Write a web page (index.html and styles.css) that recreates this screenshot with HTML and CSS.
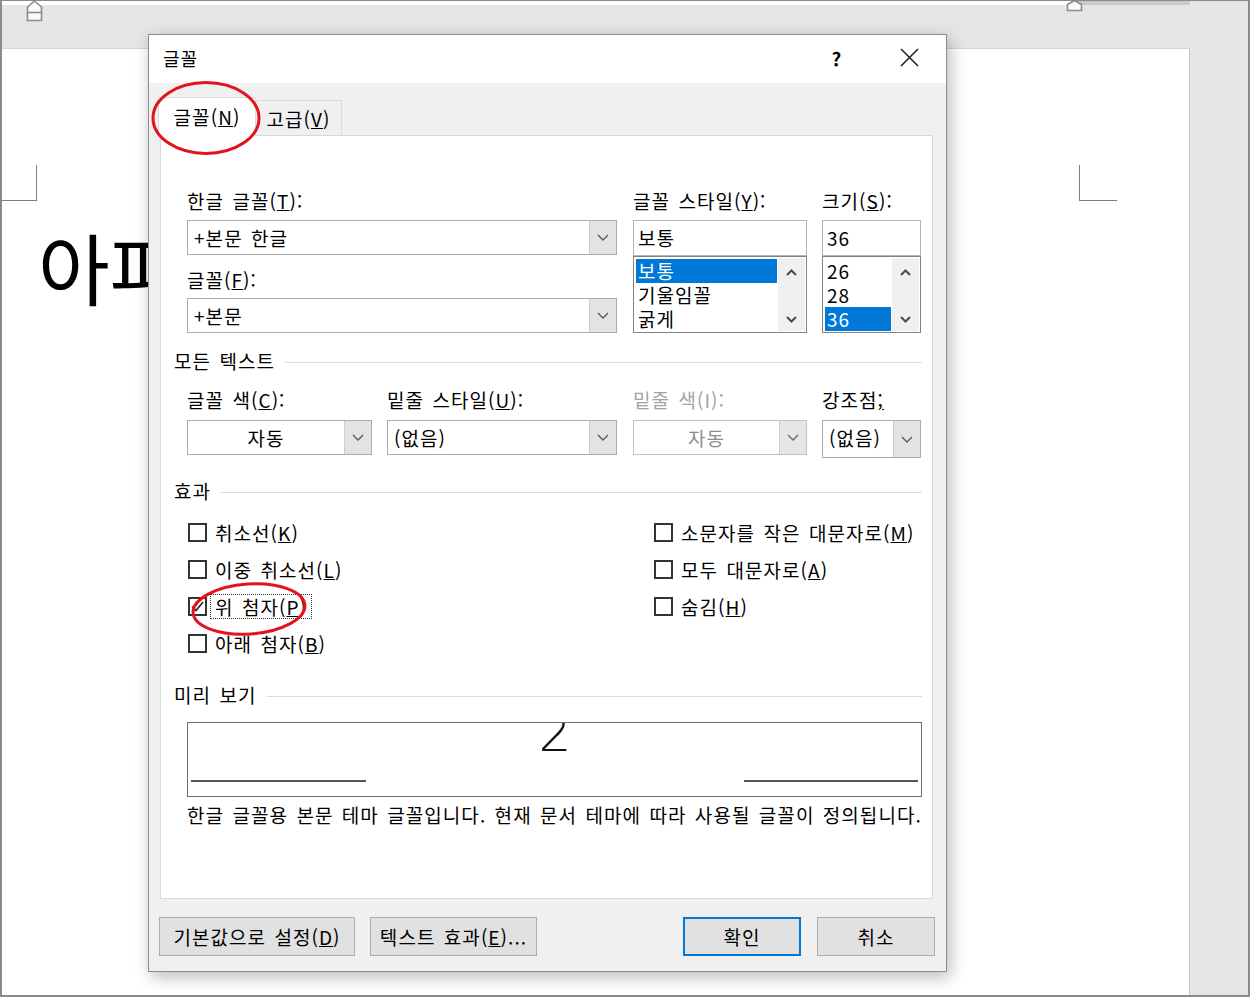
FILE: index.html
```html
<!DOCTYPE html>
<html lang="ko">
<head>
<meta charset="utf-8">
<title>글꼴</title>
<link rel="stylesheet" href="styles.css">
</head>
<body>
<div class="screen">
  <div class="doc-area">
    <div class="ruler"><div class="ruler-white"></div><div class="ruler-gray"></div></div>
    <div class="band"></div>
    <div class="page">
      <div class="corners"><div class="corner corner-left"></div><div class="corner corner-right"></div></div>
      <div class="big-text">아파트</div>
    </div>
  </div>
  <div class="side"></div>
</div>

<svg class="marker marker-left" width="17" height="22" viewBox="0 0 17 22"><path d="M8.5 1 L15.5 7 L15.5 20.5 L1.5 20.5 L1.5 7 Z" fill="#fbfbfb" stroke="#8a8a8a" stroke-width="1.6"/><path d="M1.5 12.5 H15.5" stroke="#8a8a8a" stroke-width="1.6"/></svg>
<svg class="marker marker-right" width="17" height="12" viewBox="0 0 17 12"><path d="M8.5 0.5 L15.5 4.5 L15.5 10.5 L1.5 10.5 L1.5 4.5 Z" fill="#fbfbfb" stroke="#8a8a8a" stroke-width="1.6"/></svg>

<div class="dialog">
  <div class="titlebar">
    <span class="title">글꼴</span>
    <span class="help">?</span>
    <span class="close"><svg width="19" height="19" viewBox="0 0 19 19"><path d="M1 1 L18 18 M18 1 L1 18" stroke="#1a1a1a" stroke-width="1.5"/></svg></span>
  </div>
  <div class="dlg-body">
    <div class="tabs">
      <div class="tab tab-active">글꼴(<u>N</u>)</div>
      <div class="tab tab-idle">고급(<u>V</u>)</div>
    </div>
    <div class="panel">
      <div class="row-top">
        <div class="col col-font">
          <div class="lbl">한글 글꼴(<u>T</u>):</div>
          <div class="combo combo-top">
            <span class="val">+본문 한글</span>
            <span class="drop"><svg width="12" height="7" viewBox="0 0 12 7"><path d="M1 1 L6 6 L11 1" fill="none" stroke="#555" stroke-width="1.3"/></svg></span>
          </div>
          <div class="lbl lbl-second">글꼴(<u>F</u>):</div>
          <div class="combo combo-second">
            <span class="val">+본문</span>
            <span class="drop"><svg width="12" height="7" viewBox="0 0 12 7"><path d="M1 1 L6 6 L11 1" fill="none" stroke="#555" stroke-width="1.3"/></svg></span>
          </div>
        </div>
        <div class="col col-style">
          <div class="lbl">글꼴 스타일(<u>Y</u>):</div>
          <div class="textbox">보통</div>
          <div class="listbox">
            <div class="items">
              <div class="item item-sel">보통</div>
              <div class="item">기울임꼴</div>
              <div class="item">굵게</div>
            </div>
            <div class="scroll">
              <svg width="11" height="7" viewBox="0 0 11 7"><path d="M1 6 L5.5 1.5 L10 6" fill="none" stroke="#4a4a4a" stroke-width="2"/></svg>
              <svg width="11" height="7" viewBox="0 0 11 7"><path d="M1 1 L5.5 5.5 L10 1" fill="none" stroke="#4a4a4a" stroke-width="2"/></svg>
            </div>
          </div>
        </div>
        <div class="col col-size">
          <div class="lbl">크기(<u>S</u>):</div>
          <div class="textbox">36</div>
          <div class="listbox">
            <div class="items">
              <div class="item">26</div>
              <div class="item">28</div>
              <div class="item item-sel">36</div>
            </div>
            <div class="scroll">
              <svg width="11" height="7" viewBox="0 0 11 7"><path d="M1 6 L5.5 1.5 L10 6" fill="none" stroke="#4a4a4a" stroke-width="2"/></svg>
              <svg width="11" height="7" viewBox="0 0 11 7"><path d="M1 1 L5.5 5.5 L10 1" fill="none" stroke="#4a4a4a" stroke-width="2"/></svg>
            </div>
          </div>
        </div>
      </div>

      <div class="section section-all">모든 텍스트</div>

      <div class="row-mid">
        <div class="col col-color">
          <div class="lbl">글꼴 색(<u>C</u>):</div>
          <div class="combo">
            <span class="val val-center">자동</span>
            <span class="drop"><svg width="12" height="7" viewBox="0 0 12 7"><path d="M1 1 L6 6 L11 1" fill="none" stroke="#555" stroke-width="1.3"/></svg></span>
          </div>
        </div>
        <div class="col col-under">
          <div class="lbl">밑줄 스타일(<u>U</u>):</div>
          <div class="combo">
            <span class="val">(없음)</span>
            <span class="drop"><svg width="12" height="7" viewBox="0 0 12 7"><path d="M1 1 L6 6 L11 1" fill="none" stroke="#555" stroke-width="1.3"/></svg></span>
          </div>
        </div>
        <div class="col col-ucolor">
          <div class="lbl lbl-disabled">밑줄 색(I):</div>
          <div class="combo combo-disabled">
            <span class="val val-center">자동</span>
            <span class="drop"><svg width="12" height="7" viewBox="0 0 12 7"><path d="M1 1 L6 6 L11 1" fill="none" stroke="#666" stroke-width="1.3"/></svg></span>
          </div>
        </div>
        <div class="col col-emph">
          <div class="lbl">강조점<u>;</u></div>
          <div class="combo combo-tall">
            <span class="val">(없음)</span>
            <span class="drop"><svg width="12" height="7" viewBox="0 0 12 7"><path d="M1 1 L6 6 L11 1" fill="none" stroke="#555" stroke-width="1.3"/></svg></span>
          </div>
        </div>
      </div>

      <div class="section section-fx">효과</div>

      <div class="effects">
        <div class="fx-col fx-left">
          <div class="fx-row"><span class="cb"></span><span class="fx-label">취소선(<u>K</u>)</span></div>
          <div class="fx-row"><span class="cb"></span><span class="fx-label">이중 취소선(<u>L</u>)</span></div>
          <div class="fx-row"><span class="cb"><svg width="15" height="15" viewBox="0 0 15 15"><path d="M2 7.5 L6 11.5 L13 3" fill="none" stroke="#222" stroke-width="1.6"/></svg></span><span class="fx-label fx-focus">위 첨자(<u>P</u>)</span></div>
          <div class="fx-row"><span class="cb"></span><span class="fx-label">아래 첨자(<u>B</u>)</span></div>
        </div>
        <div class="fx-col fx-right">
          <div class="fx-row"><span class="cb"></span><span class="fx-label">소문자를 작은 대문자로(<u>M</u>)</span></div>
          <div class="fx-row"><span class="cb"></span><span class="fx-label">모두 대문자로(<u>A</u>)</span></div>
          <div class="fx-row"><span class="cb"></span><span class="fx-label">숨김(<u>H</u>)</span></div>
        </div>
      </div>

      <div class="section section-preview">미리 보기</div>

      <div class="preview">
        <div class="pv-line pv-line-left"></div>
        <div class="pv-mid"><span class="pv-glyph">2</span></div>
        <div class="pv-line pv-line-right"></div>
      </div>
      <p class="desc">한글 글꼴용 본문 테마 글꼴입니다. 현재 문서 테마에 따라 사용될 글꼴이 정의됩니다.</p>
    </div>

    <div class="buttons">
      <button class="btn btn-default">기본값으로 설정(<u>D</u>)</button>
      <button class="btn btn-effects">텍스트 효과(<u>E</u>)...</button>
      <button class="btn btn-ok">확인</button>
      <button class="btn btn-cancel">취소</button>
    </div>
  </div>
</div>

<svg class="annot" width="1250" height="997" viewBox="0 0 1250 997">
  <ellipse cx="206" cy="118" rx="53" ry="35.5" fill="none" stroke="#e2131c" stroke-width="3"/>
  <ellipse cx="249" cy="609" rx="56" ry="25" transform="rotate(-4 249 609)" fill="none" stroke="#e2131c" stroke-width="3"/>
</svg>
</body>
</html>
```

FILE: styles.css
```css
* { box-sizing: border-box; }
html, body { margin: 0; padding: 0; }
body {
  position: relative;
  width: 1250px;
  height: 997px;
  overflow: hidden;
  background: #fff;
  font-family: "Noto Sans CJK KR", "Noto Sans", sans-serif;
}

/* ---------- background document ---------- */
.screen {
  width: 1250px;
  height: 997px;
  border-style: solid;
  border-color: #8a8a8a;
  border-width: 1px 2px 2px 2px;
  display: flex;
}
.doc-area { width: 1188px; display: flex; flex-direction: column; }
.ruler { height: 4px; display: flex; }
.ruler-white { width: 1073px; background: #fff; }
.ruler-gray { flex: 1; background: #c9c9c9; }
.band { height: 43px; background: #e6e6e6; }
.page {
  flex: 1;
  background: #fff;
  border-top: 1px solid #d4d4d4;
  border-right: 1px solid #c8c8c8;
  padding-top: 116px;
}
.side { flex: 1; background: #e6e6e6; }

.corners { display: flex; height: 36px; }
.corner { height: 36px; border-bottom: 1px solid #7d7d7d; }
.corner-left { width: 35px; border-right: 1px solid #7d7d7d; }
.corner-right { width: 38px; margin-left: 1042px; border-left: 1px solid #7d7d7d; }

.big-text {
  margin-top: 26px;
  margin-left: 36px;
  font-size: 78px;
  line-height: 78px;
  color: #000;
  white-space: nowrap;
}

.marker { position: absolute; }
.marker-left { left: 26px; top: 0; }
.marker-right { left: 1066px; top: 0; }

/* ---------- dialog ---------- */
.dialog {
  position: absolute;
  left: 148px;
  top: 34px;
  width: 799px;
  height: 938px;
  border: 1px solid #8c8c8c;
  background: #f0f0f0;
  box-shadow: 3px 5px 16px rgba(0, 0, 0, 0.28);
  display: flex;
  flex-direction: column;
  font-size: 19px;
  color: #000;
  word-spacing: 2px;
  letter-spacing: 1.05px;
}
.titlebar {
  height: 48px;
  background: #fff;
  display: flex;
  align-items: center;
  padding-left: 14px;
  padding-bottom: 3px;
}
.title { flex: 1; font-size: 18px; }
.help { width: 46px; text-align: center; font-size: 19px; font-weight: bold; }
.close { width: 46px; margin-left: 26px; margin-right: 14px; display: flex; justify-content: center; }

.dlg-body {
  flex: 1;
  padding: 14px 13px 15px 11px;
  display: flex;
  flex-direction: column;
}

.tabs { height: 38px; display: flex; align-items: flex-end; margin-left: -2px; }
.tab { text-align: center; white-space: nowrap; }
.tab-active {
  position: relative;
  z-index: 1;
  width: 98px;
  height: 39px;
  margin-bottom: -1px;
  background: #fff;
  border: 1px solid #d9d9d9;
  border-bottom: none;
  line-height: 38px;
}
.tab-idle {
  width: 86px;
  height: 35px;
  background: #f0f0f0;
  border: 1px solid #d9d9d9;
  border-left: none;
  border-bottom: none;
  line-height: 35px;
}

.panel {
  height: 764px;
  background: #fff;
  border: 1px solid #d9d9d9;
  padding: 54px 10px 0 26px;
}

.lbl { height: 22px; line-height: 22px; white-space: nowrap; }
.lbl-disabled { color: #a3a3a3; }

.row-top { display: flex; align-items: flex-start; }
.col { display: flex; flex-direction: column; }
.col-font { width: 430px; }
.col-style { width: 174px; margin-left: 16px; }
.col-size { width: 99px; margin-left: 15px; }

.combo {
  height: 35px;
  margin-top: 8px;
  border: 1px solid #acacac;
  background: #fff;
  display: flex;
}
.combo-second { margin-top: 7px; }
.lbl-second { margin-top: 14px; }
.combo-tall { height: 38px; }
.val { flex: 1; padding-left: 6px; line-height: 33px; white-space: nowrap; overflow: hidden; }
.val-center { text-align: center; padding-left: 0; }
.drop {
  width: 27px;
  background: #e3e3e3;
  border-left: 1px solid #cdcdcd;
  display: flex;
  align-items: center;
  justify-content: center;
}
.combo-disabled { border-color: #c2c2c2; }
.combo-disabled .val { color: #8d8d8d; }
.combo-disabled .drop { background: #e6e6e6; }

.textbox {
  height: 36px;
  margin-top: 8px;
  border: 1px solid #b4b4b4;
  padding-left: 4px;
  line-height: 33px;
}
.listbox {
  height: 77px;
  border: 1px solid #828282;
  display: flex;
}
.items { flex: 1; padding: 2px 1px 0 2px; }
.item { height: 24px; line-height: 24px; padding-left: 2px; white-space: nowrap; }
.item-sel { background: #0078d7; color: #fff; }
.scroll {
  width: 27px;
  margin: 1px 1px 1px 0;
  background: #f0f0f0;
  display: flex;
  flex-direction: column;
  align-items: center;
  justify-content: space-between;
  padding: 11px 0 8px;
}

.section {
  display: flex;
  align-items: center;
  height: 22px;
  line-height: 22px;
  margin-left: -13px;
  white-space: nowrap;
}
.section::after {
  content: "";
  flex: 1;
  height: 1px;
  margin-left: 10px;
  margin-top: 2px;
  background: #dcdcdc;
}
.section-all { margin-top: 17px; }
.section-fx { margin-top: 22px; }
.section-preview { margin-top: 22px; }

.row-mid { display: flex; align-items: flex-start; margin-top: 17px; }
.row-mid .combo { margin-top: 9px; }
.col-color { width: 185px; }
.col-under { width: 230px; margin-left: 15px; }
.col-ucolor { width: 174px; margin-left: 16px; }
.col-emph { width: 99px; margin-left: 15px; }

.effects { display: flex; margin-top: 12px; }
.fx-col { display: flex; flex-direction: column; }
.fx-left { width: 466px; }
.fx-row { height: 37px; display: flex; align-items: center; }
.cb {
  width: 19px;
  height: 19px;
  margin-left: 1px;
  border: 2px solid #333;
  background: #fff;
  display: flex;
  align-items: center;
  justify-content: center;
}
.fx-label {
  margin-left: 3px;
  padding: 0 4px;
  line-height: 23px;
  border: 1px dotted transparent;
  white-space: nowrap;
}
.fx-focus { border-color: #333; }

.preview {
  height: 75px;
  margin-top: 16px;
  border: 1px solid #6e6e6e;
  overflow: hidden;
  display: flex;
  align-items: flex-end;
  padding: 0 3px 14px 3px;
}
.pv-line { height: 2px; background: #555; }
.pv-line-left { width: 175px; }
.pv-line-right { width: 174px; }
.pv-mid {
  flex: 1;
  align-self: flex-start;
  display: flex;
  justify-content: center;
  margin-top: -18px;
}
.pv-glyph {
  font-family: "DejaVu Sans", "Liberation Sans", sans-serif;
  font-weight: 200;
  font-size: 52px;
  line-height: 56px;
  letter-spacing: 0;
  color: #111;
}
.desc {
  margin: 7px 0 0 0;
  line-height: 22px;
  white-space: nowrap;
  word-spacing: 2px;
}

.buttons {
  margin-top: 18px;
  margin-left: -1px;
  margin-right: -2px;
  height: 39px;
  display: flex;
}
.btn {
  height: 39px;
  border: 1px solid #adadad;
  background: #e1e1e1;
  font-family: inherit;
  font-size: 19px;
  color: #000;
  padding: 0;
  word-spacing: 2px;
  letter-spacing: 1.05px;
  white-space: nowrap;
}
.btn-default { width: 196px; }
.btn-effects { width: 167px; margin-left: 15px; }
.btn-ok { width: 118px; margin-left: auto; border: 2px solid #0078d7; }
.btn-cancel { width: 118px; margin-left: 16px; }

.annot { position: absolute; left: 0; top: 0; pointer-events: none; z-index: 5; }
```
